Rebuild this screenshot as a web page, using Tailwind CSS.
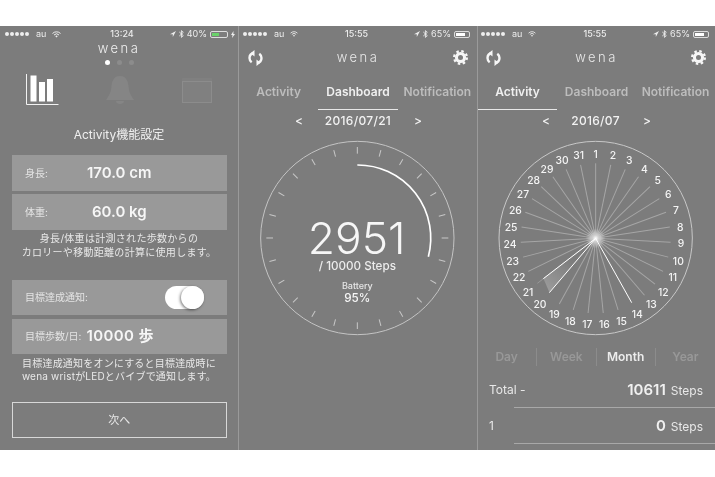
<!doctype html>
<html lang="ja">
<head>
<meta charset="utf-8">
<script src="https://cdn.jsdelivr.net/npm/@tailwindcss/browser@4"></script>
</head>
<body class="bg-white overflow-hidden font-['Inter','Noto_Sans_CJK_JP',sans-serif]">
<div class="w-[715px] h-[477px] pt-[26px] blur-[0.4px]">
<div class="flex h-[424px] gap-px bg-[#9a9a9a] text-white">

<!-- PHONE 1 -->
<section class="w-[238px] shrink-0 bg-[#7c7c7c] flex flex-col">
  <div class="h-4 grid grid-cols-3 items-center text-[9px] text-[#ececec] pl-[5px] pr-[3px]">
    <div class="flex items-center gap-[6px]">
      <svg width="25" height="4" viewBox="0 0 25 4" fill="#eee"><circle cx="2" cy="2" r="2"/><circle cx="7" cy="2" r="2"/><circle cx="12" cy="2" r="2"/><circle cx="17" cy="2" r="2"/><circle cx="22" cy="2" r="2"/></svg>
      <span>au</span>
      <svg width="9" height="7" viewBox="0 0 9 7" fill="none" stroke="#eee" stroke-width="1"><path d="M.5 2.5a5.6 5.6 0 0 1 8 0M2 4a3.5 3.5 0 0 1 5 0"/><path d="M3.3 5.2a1.7 1.7 0 0 1 2.4 0L4.5 6.6z" fill="#eee" stroke="none"/></svg>
    </div>
    <div class="text-center font-medium pl-1">13:24</div>
    <div class="flex items-center justify-end gap-[3px] whitespace-nowrap">
      <svg width="6" height="6" viewBox="0 0 6 6" fill="#eee"><path d="M6 0 0 3.2h2.8V6z"/></svg>
      <svg width="5" height="8" viewBox="0 0 5 8" fill="none" stroke="#eee" stroke-width=".9"><path d="M.3 2 4.3 5.6 2.4 7.4V.6l1.9 1.8L.3 6"/></svg>
      <span>40%</span>
      <span class="w-[18px] h-[7px] border border-[#ddd] rounded-[2px] p-px flex"><span class="w-[7px] bg-[#6ad36a]"></span></span>
      <svg width="4" height="7" viewBox="0 0 4 7" fill="#eee"><path d="M2.5 0 0 4h1.5L1 7l3-4H2.4z"/></svg>
    </div>
  </div>
  <div class="text-center text-[13px] leading-[14px] tracking-[2.5px] font-light text-[#f0f0f0] mt-[-1px]">wena</div>
  <div class="flex justify-center gap-[7px] mt-[5px]">
    <span class="size-[5px] rounded-full bg-white"></span>
    <span class="size-[5px] rounded-full bg-[#8c8c8c]"></span>
    <span class="size-[5px] rounded-full bg-[#8c8c8c]"></span>
  </div>
  <div class="relative h-[32px] mt-[9px]">
    <svg class="absolute left-[26px] top-0" width="33" height="32" viewBox="0 0 33 32"><path d="M.5 0V30.5H32.5" fill="none" stroke="#f2f2f2" stroke-width="1"/><rect x="4.500" y="1.500" width="6" height="26" fill="#fff"/><rect x="13" y="8" width="6" height="19.500" fill="#fff"/><rect x="21" y="5" width="6" height="22.500" fill="#fff"/></svg>
    <svg class="absolute left-[106px] top-[2px]" width="28" height="29" viewBox="0 0 28 29" fill="#858585"><path d="M14 0c6 0 8 5 8.500 10 .5 6 2 9 5.500 14H0c3.500-5 5-8 5.500-14C6 5 8 0 14 0z"/><path d="M10 25h8c0 2-2 3-4 3s-4-1-4-3z"/></svg>
    <svg class="absolute left-[182px] top-[4px]" width="30" height="25" viewBox="0 0 30 25"><rect width="30" height="25" rx="1" fill="#808080"/><rect x=".5" y="3.500" width="29" height="21" fill="none" stroke="#8c8c8c"/></svg>
  </div>
  <div class="text-center text-[12px] leading-[16px] mt-[21px] text-[#f0f0f0]">Activity機能設定</div>
  <div class="mx-3 w-[214.5px] h-[36px] mt-[12px] bg-[#999999] flex items-center relative">
    <span class="pl-[13px] text-[10px] text-[#e4e4e4]">身長:</span>
    <span class="absolute left-[75px] text-[15px] font-semibold text-[#f6f6f6]">170.0 cm</span>
  </div>
  <div class="mx-3 w-[214.500px] h-[36px] mt-[3px] bg-[#999999] flex items-center relative">
    <span class="pl-[13px] text-[10px] text-[#e4e4e4]">体重:</span>
    <span class="absolute left-[80px] text-[15px] font-semibold text-[#f6f6f6]">60.0 kg</span>
  </div>
  <p class="text-center text-[10px] leading-[14px] mt-[1px] text-[#e8e8e8] tracking-[0.3px]">身長/体重は計測された歩数からの<br>カロリーや移動距離の計算に使用します。</p>
  <div class="mx-3 w-[214.5px] h-[35px] mt-[21px] bg-[#999999] flex items-center justify-between pr-[23px]">
    <span class="pl-[13px] text-[10px] text-[#e4e4e4]">目標達成通知:</span>
    <span class="relative w-[39px] h-[23px] rounded-full bg-white block">
      <span class="absolute right-0 top-0 size-[23px] rounded-full bg-white shadow-[-1px_1px_3px_rgba(0,0,0,0.5)]"></span>
    </span>
  </div>
  <div class="mx-3 w-[214.5px] h-[35px] mt-[4px] bg-[#999999] flex items-center">
    <span class="pl-[13px] text-[10px] text-[#e4e4e4]">目標歩数/日:</span>
    <span class="pl-[5px] text-[15px] font-semibold text-[#f6f6f6] tracking-[0.4px]">10000 歩</span>
  </div>
  <p class="text-center text-[10px] leading-[13px] mt-[3px] text-[#e8e8e8] tracking-[0.2px]">目標達成通知をオンにすると目標達成時に<br>wena wristがLEDとバイブで通知します。</p>
  <div class="mx-3 w-[214.5px] h-[36px] mt-[19px] border-[1.5px] border-[#d8d8d8] flex items-center justify-center text-[11px] text-[#e8e8e8]">次へ</div>
</section>

<!-- PHONE 2 -->
<section class="w-[238px] shrink-0 bg-[#7c7c7c] flex flex-col">
  <div class="h-4 grid grid-cols-3 items-center text-[9px] text-[#ececec] pl-[4px] pr-[7px]">
    <div class="flex items-center gap-[6px]">
      <svg width="25" height="4" viewBox="0 0 25 4" fill="#eee"><circle cx="2" cy="2" r="2"/><circle cx="7" cy="2" r="2"/><circle cx="12" cy="2" r="2"/><circle cx="17" cy="2" r="2"/><circle cx="22" cy="2" r="2"/></svg>
      <span>au</span>
      <svg width="8" height="6" viewBox="0 0 9 7" fill="none" stroke="#eee" stroke-width="1"><path d="M.5 2.5a5.6 5.6 0 0 1 8 0M2 4a3.5 3.5 0 0 1 5 0"/><path d="M3.3 5.2a1.7 1.7 0 0 1 2.4 0L4.500 6.600z" fill="#eee" stroke="none"/></svg>
    </div>
    <div class="text-center font-medium">15:55</div>
    <div class="flex items-center justify-end gap-[3px] whitespace-nowrap">
      <svg width="6" height="6" viewBox="0 0 6 6" fill="#eee"><path d="M6 0 0 3.200h2.800V6z"/></svg>
      <svg width="5" height="8" viewBox="0 0 5 8" fill="none" stroke="#eee" stroke-width=".9"><path d="M.3 2 4.300 5.600 2.400 7.400V.6l1.900 1.800L.3 6"/></svg>
      <span>65%</span>
      <span class="w-[16px] h-[7px] border border-[#ddd] rounded-[2px] p-px flex"><span class="w-[9px] bg-white"></span></span>
    </div>
  </div>
  <div class="h-8 relative flex items-center justify-center">
    <svg class="absolute left-[9px] top-[8px]" width="15" height="16" viewBox="0 0 15 16" fill="none" stroke="#f6f6f6" stroke-width="2.400"><path d="M6 3C3.300 3.500 1.500 5.400 1.500 8c0 1.800.8 3.300 2.200 4.300"/><path d="M9 13c2.700-.5 4.500-2.400 4.500-5 0-1.800-.8-3.300-2.200-4.300"/><path d="M6.500 0v6.500L2.500 3.200zM8.500 16V9.500l4 3.300z" fill="#f6f6f6" stroke="none"/></svg>
    <span class="text-[13px] tracking-[2.5px] font-light text-[#e8e8e8]">wena</span>
    <svg class="absolute right-[9px] top-[8px]" width="15" height="15" viewBox="0 0 15 15"><circle cx="7.500" cy="7.500" r="5.600" fill="#f6f6f6"/><circle cx="7.500" cy="7.500" r="6.400" fill="none" stroke="#f6f6f6" stroke-width="2.200" stroke-dasharray="2.500 2.530"/><circle cx="7.500" cy="7.500" r="2.500" fill="#7c7c7c"/></svg>
  </div>
  <div class="flex h-[36px] text-[12px] font-semibold">
    <div class="flex-1 flex items-center justify-center text-[#bdbdbd]">Activity</div>
    <div class="flex-1 flex items-center justify-center text-[#f0f0f0] border-b-[1.5px] border-[#e8e8e8]">Dashboard</div>
    <div class="flex-1 flex items-center justify-center text-[#bdbdbd]">Notification</div>
  </div>
  <div class="relative h-[22px] flex items-center justify-center text-[12px] font-medium text-[#f2f2f2] tracking-[0.3px]">
    <span class="absolute left-[56px]">&lt;</span><span>2016/07/21</span><span class="absolute left-[175px]">&gt;</span>
  </div>
  <svg class="ml-[11px] mt-[3px] block" width="220" height="210" viewBox="0 0 660 630" fill="none">
    <circle cx="322" cy="309" r="290" stroke="#c4c4c4" stroke-width="3"/>
    <g stroke="#c8c8c8" stroke-width="3">
      <path d="M322 36V56" transform="rotate(0 322 309)"/><path d="M322 36V56" transform="rotate(15 322 309)"/><path d="M322 36V56" transform="rotate(30 322 309)"/><path d="M322 36V56" transform="rotate(45 322 309)"/><path d="M322 36V56" transform="rotate(60 322 309)"/><path d="M322 36V56" transform="rotate(75 322 309)"/><path d="M322 36V56" transform="rotate(90 322 309)"/><path d="M322 36V56" transform="rotate(105 322 309)"/><path d="M322 36V56" transform="rotate(120 322 309)"/><path d="M322 36V56" transform="rotate(135 322 309)"/><path d="M322 36V56" transform="rotate(150 322 309)"/><path d="M322 36V56" transform="rotate(165 322 309)"/><path d="M322 36V56" transform="rotate(180 322 309)"/><path d="M322 36V56" transform="rotate(195 322 309)"/><path d="M322 36V56" transform="rotate(210 322 309)"/><path d="M322 36V56" transform="rotate(225 322 309)"/><path d="M322 36V56" transform="rotate(240 322 309)"/><path d="M322 36V56" transform="rotate(255 322 309)"/><path d="M322 36V56" transform="rotate(270 322 309)"/><path d="M322 36V56" transform="rotate(285 322 309)"/><path d="M322 36V56" transform="rotate(300 322 309)"/><path d="M322 36V56" transform="rotate(315 322 309)"/><path d="M322 36V56" transform="rotate(330 322 309)"/><path d="M322 36V56" transform="rotate(345 322 309)"/>
    </g>
    <path d="M322 90A219 219 0 0 1 535 365" stroke="#fff" stroke-width="5"/>
    <g fill="#f6f6f6" text-anchor="middle">
      <text x="320" y="358" font-size="133" font-weight="300">2951</text>
      <text x="322" y="405" font-size="35" font-weight="500" fill="#ececec">/ 10000 Steps</text>
      <text x="322" y="461" font-size="27" font-weight="500" fill="#e6e6e6">Battery</text>
      <text x="322" y="500" font-size="35" font-weight="500">95%</text>
    </g>
  </svg>
</section>

<!-- PHONE 3 -->
<section class="flex-1 min-w-0 bg-[#7c7c7c] flex flex-col">
  <div class="h-4 grid grid-cols-3 items-center text-[9px] text-[#ececec] pl-[3px] pr-[6px]">
    <div class="flex items-center gap-[6px]">
      <svg width="25" height="4" viewBox="0 0 25 4" fill="#eee"><circle cx="2" cy="2" r="2"/><circle cx="7" cy="2" r="2"/><circle cx="12" cy="2" r="2"/><circle cx="17" cy="2" r="2"/><circle cx="22" cy="2" r="2"/></svg>
      <span>au</span>
      <svg width="8" height="6" viewBox="0 0 9 7" fill="none" stroke="#eee" stroke-width="1"><path d="M.5 2.500a5.600 5.600 0 0 1 8 0M2 4a3.500 3.500 0 0 1 5 0"/><path d="M3.300 5.200a1.700 1.700 0 0 1 2.400 0L4.500 6.600z" fill="#eee" stroke="none"/></svg>
    </div>
    <div class="text-center font-medium">15:55</div>
    <div class="flex items-center justify-end gap-[3px] whitespace-nowrap">
      <svg width="6" height="6" viewBox="0 0 6 6" fill="#eee"><path d="M6 0 0 3.200h2.800V6z"/></svg>
      <svg width="5" height="8" viewBox="0 0 5 8" fill="none" stroke="#eee" stroke-width=".9"><path d="M.3 2 4.300 5.600 2.400 7.400V.6l1.900 1.800L.3 6"/></svg>
      <span>65%</span>
      <span class="w-[16px] h-[7px] border border-[#ddd] rounded-[2px] p-px flex"><span class="w-[9px] bg-white"></span></span>
    </div>
  </div>
  <div class="h-8 relative flex items-center justify-center">
    <svg class="absolute left-[8px] top-[8px]" width="15" height="16" viewBox="0 0 15 16" fill="none" stroke="#f6f6f6" stroke-width="2.400"><path d="M6 3C3.300 3.500 1.500 5.400 1.500 8c0 1.800.8 3.300 2.200 4.300"/><path d="M9 13c2.700-.5 4.500-2.400 4.500-5 0-1.800-.8-3.300-2.200-4.300"/><path d="M6.500 0v6.500L2.500 3.200zM8.500 16V9.500l4 3.300z" fill="#f6f6f6" stroke="none"/></svg>
    <span class="text-[13px] tracking-[2.5px] font-light text-[#e8e8e8]">wena</span>
    <svg class="absolute right-[9px] top-[8px]" width="15" height="15" viewBox="0 0 15 15"><circle cx="7.500" cy="7.500" r="5.600" fill="#f6f6f6"/><circle cx="7.500" cy="7.500" r="6.400" fill="none" stroke="#f6f6f6" stroke-width="2.200" stroke-dasharray="2.500 2.530"/><circle cx="7.500" cy="7.500" r="2.500" fill="#7c7c7c"/></svg>
  </div>
  <div class="flex h-[36px] text-[12px] font-semibold">
    <div class="flex-1 flex items-center justify-center text-[#f0f0f0] border-b-[1.5px] border-[#e8e8e8]">Activity</div>
    <div class="flex-1 flex items-center justify-center text-[#bdbdbd]">Dashboard</div>
    <div class="flex-1 flex items-center justify-center text-[#bdbdbd]">Notification</div>
  </div>
  <div class="relative h-[22px] flex items-center justify-center text-[12px] font-medium text-[#f2f2f2] tracking-[0.3px]">
    <span class="absolute left-[64px]">&lt;</span><span class="pr-[2px]">2016/07</span><span class="absolute left-[165px]">&gt;</span>
  </div>
  <svg class="ml-[12px] mt-[3px] block" width="215" height="210" viewBox="0 0 645 630" fill="none">
    <defs>
      <linearGradient id="wedge" gradientUnits="userSpaceOnUse" x1="240" y1="370" x2="165" y2="455"><stop offset="0" stop-color="#9a9a9a" stop-opacity="0"/><stop offset="1" stop-color="#9a9a9a"/></linearGradient>
      <radialGradient id="glow"><stop offset="0" stop-color="#fff"/><stop offset=".3" stop-color="#fff" stop-opacity=".5"/><stop offset="1" stop-color="#fff" stop-opacity="0"/></radialGradient>
    </defs>
    <circle cx="317" cy="309" r="290" stroke="#c8c8c8" stroke-width="3"/>
    <g stroke="#a6a6a6" stroke-width="3">
      <path d="M317 310V85"/><path d="M317 310V85" transform="rotate(11.61 317 310)"/><path d="M317 310V85" transform="rotate(23.23 317 310)"/><path d="M317 310V85" transform="rotate(34.84 317 310)"/><path d="M317 310V85" transform="rotate(46.45 317 310)"/><path d="M317 310V85" transform="rotate(58.06 317 310)"/><path d="M317 310V85" transform="rotate(69.68 317 310)"/><path d="M317 310V85" transform="rotate(81.29 317 310)"/><path d="M317 310V85" transform="rotate(92.9 317 310)"/><path d="M317 310V85" transform="rotate(104.5 317 310)"/><path d="M317 310V85" transform="rotate(116.1 317 310)"/><path d="M317 310V85" transform="rotate(127.7 317 310)"/><path d="M317 310V85" transform="rotate(139.4 317 310)"/><path d="M317 310V85" transform="rotate(162.6 317 310)"/><path d="M317 310V85" transform="rotate(174.2 317 310)"/><path d="M317 310V85" transform="rotate(185.8 317 310)"/><path d="M317 310V85" transform="rotate(197.4 317 310)"/><path d="M317 310V85" transform="rotate(209 317 310)"/><path d="M317 310V85" transform="rotate(243.9 317 310)"/><path d="M317 310V85" transform="rotate(255.5 317 310)"/><path d="M317 310V85" transform="rotate(267.1 317 310)"/><path d="M317 310V85" transform="rotate(278.7 317 310)"/><path d="M317 310V85" transform="rotate(290.3 317 310)"/><path d="M317 310V85" transform="rotate(301.9 317 310)"/><path d="M317 310V85" transform="rotate(313.5 317 310)"/><path d="M317 310V85" transform="rotate(325.2 317 310)"/><path d="M317 310V85" transform="rotate(336.8 317 310)"/><path d="M317 310V85" transform="rotate(348.4 317 310)"/>
    </g>
    <path d="M317 310 160 430 178 472Z" fill="url(#wedge)"/>
    <path d="M317 310 142 445" stroke="#a6a6a6" stroke-width="2"/>
    <path d="M317 310 425 503M317 310 178 473M317 310 160 431" stroke="#fff" stroke-width="3"/>
    <circle cx="317" cy="310" r="30" fill="url(#glow)"/>
    <g fill="#f4f4f4" font-size="31" font-weight="500" text-anchor="middle" dominant-baseline="central">
      <text x="317" y="57">1</text><text x="369" y="61">2</text><text x="418" y="76">3</text><text x="463" y="102">4</text><text x="503" y="135">5</text><text x="535" y="177">6</text><text x="558" y="224">7</text><text x="571" y="275">8</text><text x="573" y="325">9</text><text x="565" y="377">10</text><text x="548" y="427">11</text><text x="520" y="471">12</text><text x="484" y="508">13</text><text x="442" y="538">14</text><text x="395" y="558">15</text><text x="343" y="568">16</text><text x="292" y="568">17</text><text x="241" y="558">18</text><text x="193" y="538">19</text><text x="150" y="508">20</text><text x="114" y="471">21</text><text x="87" y="427">22</text><text x="68" y="377">23</text><text x="60" y="326">24</text><text x="63" y="275">25</text><text x="76" y="224">26</text><text x="99" y="177">27</text><text x="131" y="135">28</text><text x="171" y="102">29</text><text x="216" y="76">30</text><text x="266" y="61">31</text>
    </g>
  </svg>
  <div class="grid grid-cols-4 h-5 text-[12px] font-semibold text-[#989898]">
    <div class="flex items-center justify-center border-r border-[#8c8c8c] my-[3px] pr-[1px]">Day</div>
    <div class="flex items-center justify-center border-r border-[#8c8c8c] my-[3px]">Week</div>
    <div class="flex items-center justify-center border-r border-[#8c8c8c] my-[3px] text-[#ececec]">Month</div>
    <div class="flex items-center justify-center my-[3px]">Year</div>
  </div>
  <div class="h-[43px] pt-[7px] relative flex items-center justify-between pl-[11px] pr-[12px] text-[#e8e8e8] text-[12px]">
    <span>Total -</span>
    <span class="flex items-baseline gap-[5px]"><span class="text-[15px] font-semibold text-[#f0f0f0]">10611</span><span>Steps</span></span>
    <span class="absolute left-[36px] right-0 bottom-0 h-[1.5px] bg-[#a8a8a8]"></span>
  </div>
  <div class="h-[36px] relative flex items-center justify-between pl-[11px] pr-[12px] text-[#e8e8e8] text-[12px]">
    <span>1</span>
    <span class="flex items-baseline gap-[5px]"><span class="text-[15px] font-semibold text-[#f0f0f0]">0</span><span>Steps</span></span>
    <span class="absolute left-[36px] right-0 bottom-0 h-[1.5px] bg-[#a8a8a8]"></span>
  </div>
</section>

</div>
</div>
</body>
</html>
